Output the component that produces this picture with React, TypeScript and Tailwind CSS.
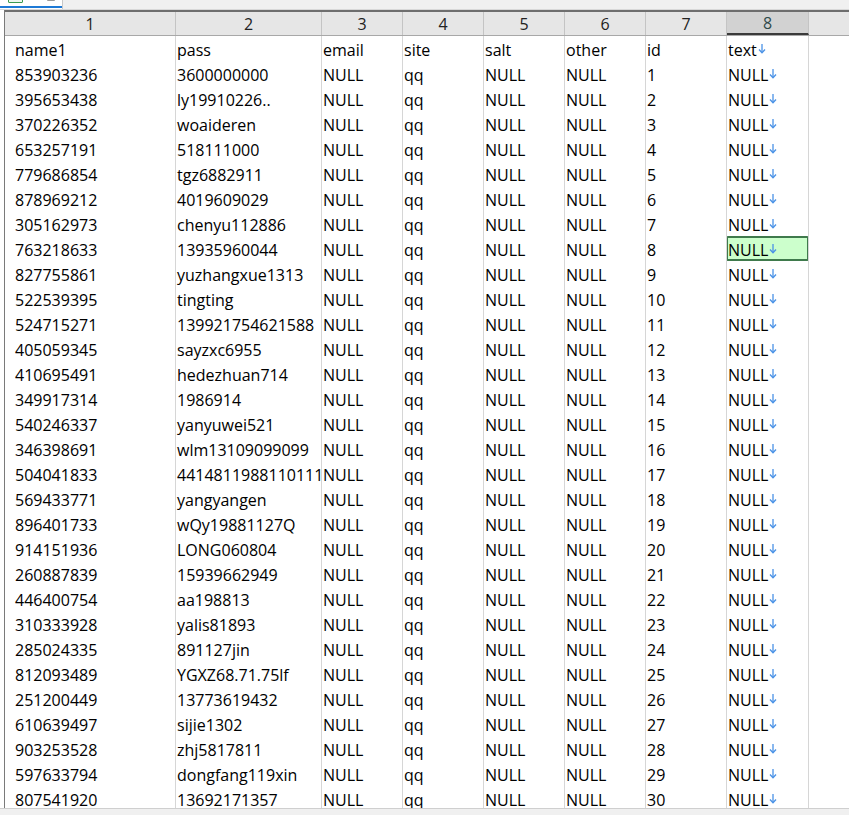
import React from "react";

const widths = [171, 146, 81, 81, 81, 81, 81, 82];
const colW = ["w-[171px]", "w-[146px]", "w-[81px]", "w-[81px]", "w-[81px]", "w-[81px]", "w-[81px]", "w-[82px]"];

const rows: [string, string][] = [
  ["853903236", "3600000000"],
  ["395653438", "ly19910226.."],
  ["370226352", "woaideren"],
  ["653257191", "518111000"],
  ["779686854", "tgz6882911"],
  ["878969212", "4019609029"],
  ["305162973", "chenyu112886"],
  ["763218633", "13935960044"],
  ["827755861", "yuzhangxue1313"],
  ["522539395", "tingting"],
  ["524715271", "139921754621588"],
  ["405059345", "sayzxc6955"],
  ["410695491", "hedezhuan714"],
  ["349917314", "1986914"],
  ["540246337", "yanyuwei521"],
  ["346398691", "wlm13109099099"],
  ["504041833", "4414811988110111"],
  ["569433771", "yangyangen"],
  ["896401733", "wQy19881127Q"],
  ["914151936", "LONG060804"],
  ["260887839", "15939662949"],
  ["446400754", "aa198813"],
  ["310333928", "yalis81893"],
  ["285024335", "891127jin"],
  ["812093489", "YGXZ68.71.75lf"],
  ["251200449", "13773619432"],
  ["610639497", "sijie1302"],
  ["903253528", "zhj5817811"],
  ["597633794", "dongfang119xin"],
  ["807541920", "13692171357"],
];

function DownArrow() {
  return (
    <svg width="8" height="11" viewBox="0 0 8 11" className="ml-[1px] mt-[-3px] shrink-0">
      <path d="M4 1 V9.5" stroke="#4a92e6" strokeWidth="1.3" fill="none" />
      <path d="M1 6.5 L4 9.8 L7 6.5" stroke="#4a92e6" strokeWidth="1.3" fill="none" />
    </svg>
  );
}

function Cell({ i, children, selected }: { i: number; children: React.ReactNode; selected?: boolean }) {
  return (
    <div
      className={`${colW[i]} relative h-[25px] shrink-0 border-r border-[#d6d6d6] flex items-center overflow-hidden whitespace-nowrap pt-[2px] ${
        i === 0 ? "pl-[10px]" : "pl-[1px]"
      }`}
    >
      {selected && (
        <div className="absolute left-[-1px] top-[0px] w-[83px] h-[25px] bg-[#ccffcc] border-2 border-[#3f7a4c] rounded-[2px]" />
      )}
      <div className="relative flex items-center">{children}</div>
    </div>
  );
}

export default function App() {
  const header = ["name1", "pass", "email", "site", "salt", "other", "id", "text"];
  return (
    <div className="w-[849px] h-[815px] bg-white overflow-hidden flex flex-col font-['Open_Sans',sans-serif] text-[16px] text-black">
      {/* tab strip */}
      <div className="h-[10px] shrink-0 bg-[#f0f0f0] border-b border-[#d8d8d8] flex">
        <div className="relative w-[63px] h-[9px] bg-white border-r border-[#c8c8c8]">
          <div className="absolute left-[8px] top-[-4px] w-[15px] h-[7px] border border-[#3c9a52] rounded-[1px] bg-[#eef7ee]" />
          <div className="absolute left-[47px] top-[-2px] w-[8px] h-[3px] bg-[#9a9a9a] rounded-[1px]" />
          <div className="absolute left-0 bottom-[1px] w-[62px] h-[2px] bg-[#1e7ad6]" />
        </div>
      </div>

      <div className="flex-1 overflow-hidden pl-[4px]">
        <div className="border-l border-[#7a7a7a] h-full overflow-hidden">
          {/* column number header */}
          <div className="flex h-[26px] bg-[#e6e6e6] border-t-2 border-t-[#6e6e6e] border-b border-b-[#a8a8a8]">
            {widths.map((_, i) => (
              <div
                key={i}
                className={`${colW[i]} shrink-0 flex items-center justify-center pt-[1px] border-r border-[#c4c4c4] ${
                  i === 7 ? "bg-[#d2d2d2] text-[#2f4a4a] border-b-2 border-b-[#3a3a3a]" : "text-[#222]"
                }`}
              >
                {i + 1}
              </div>
            ))}
            <div className="flex-1" />
          </div>

          {/* name row */}
          <div className="flex">
            {header.map((h, i) => (
              <Cell key={i} i={i}>
                {h}
                {i === 7 && <DownArrow />}
              </Cell>
            ))}
          </div>

          {rows.map(([a, b], r) => (
            <div className="flex" key={a}>
              <Cell i={0}>{a}</Cell>
              <Cell i={1}>{b}</Cell>
              <Cell i={2}>NULL</Cell>
              <Cell i={3}>qq</Cell>
              <Cell i={4}>NULL</Cell>
              <Cell i={5}>NULL</Cell>
              <Cell i={6}>{r + 1}</Cell>
              <Cell i={7} selected={r === 7}>
                NULL
                <DownArrow />
              </Cell>
            </div>
          ))}
        </div>
      </div>

      <div className="h-[7px] shrink-0 bg-[#f0f0f0] border-t border-[#cfcfcf]" />
    </div>
  );
}
